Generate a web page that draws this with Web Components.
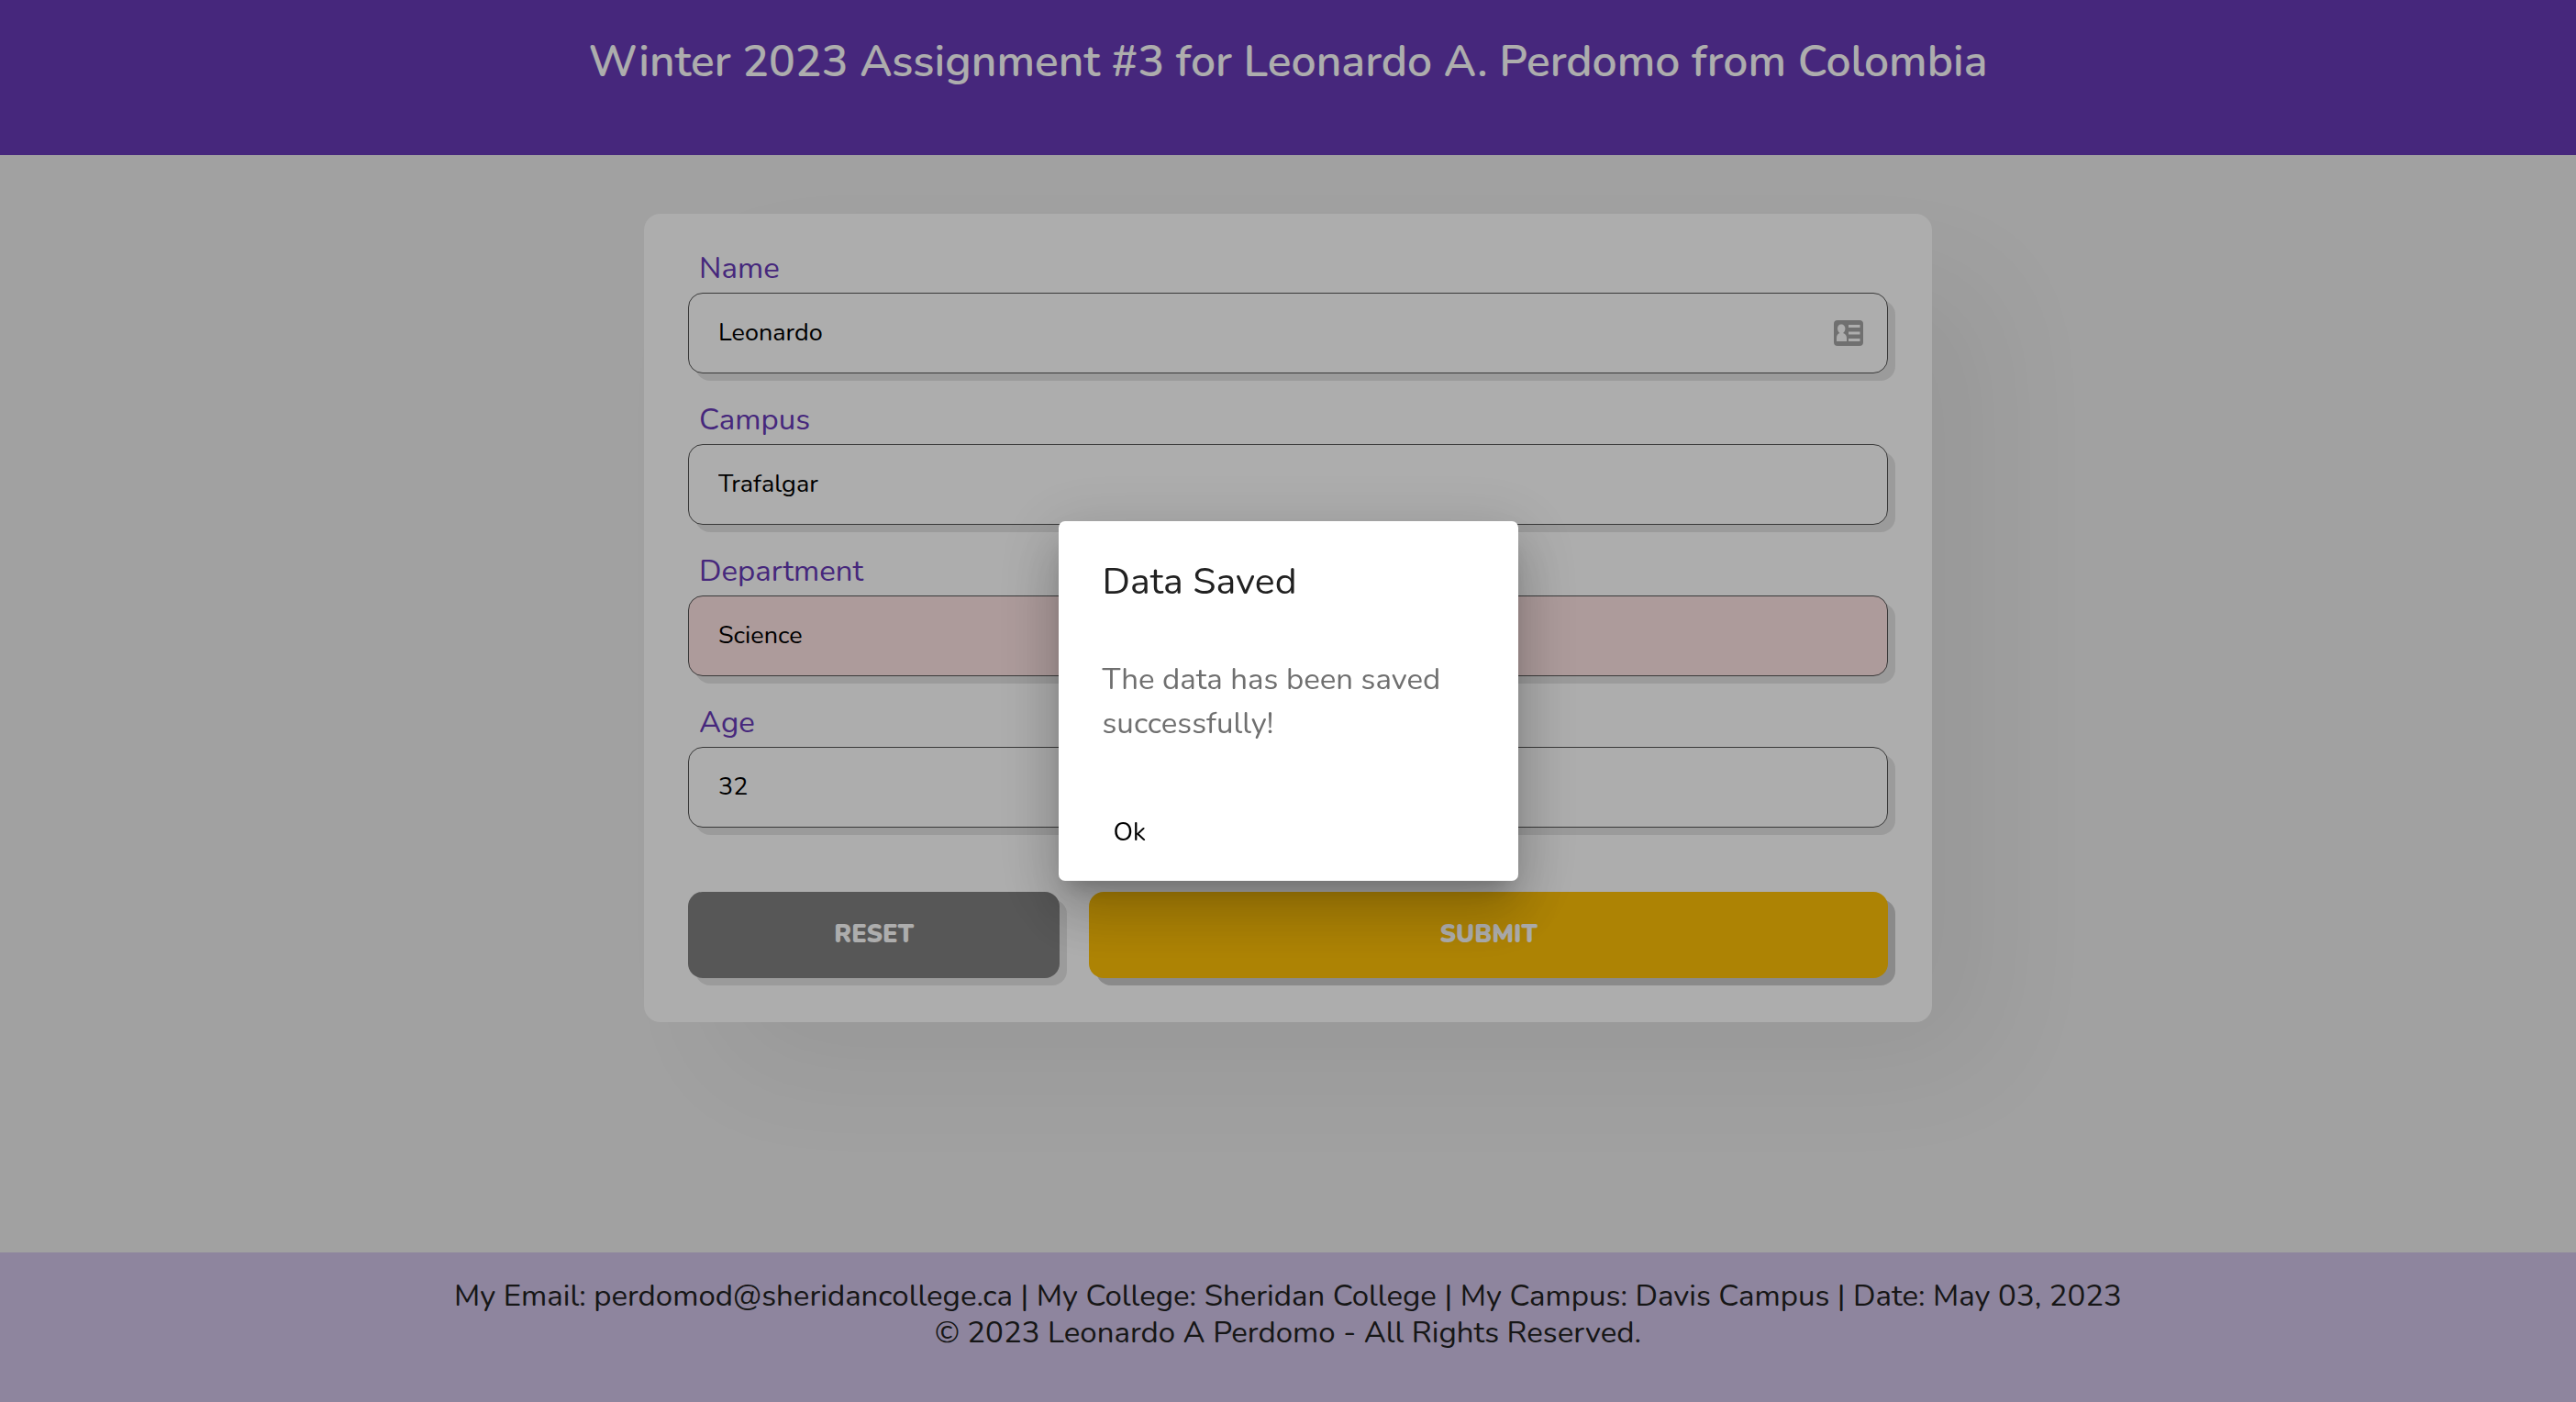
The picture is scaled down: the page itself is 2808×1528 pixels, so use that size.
<!DOCTYPE html>
<html lang="en">
<head>
<meta charset="utf-8">
<title>Assignment 3</title>
<style>
  html, body { margin: 0; }
  body { font-family: Nunito, "Noto Sans", "Open Sans", sans-serif; color: #212121; background: #eee; }
</style>
</head>
<body>
<app-shell>
  <app-header slot="header">Winter 2023 Assignment #3 for Leonardo A. Perdomo from Colombia</app-header>
  <student-form>
    <form-field label="Name" value="Leonardo" icon></form-field>
    <form-field label="Campus" value="Trafalgar"></form-field>
    <form-field label="Department" value="Science" invalid></form-field>
    <form-field label="Age" value="32"></form-field>
    <form-button slot="actions" kind="reset">RESET</form-button>
    <form-button slot="actions" kind="submit">SUBMIT</form-button>
  </student-form>
  <app-footer slot="footer">
    <span>My Email: perdomod@sheridancollege.ca | My College: Sheridan College | My Campus: Davis Campus | Date: May 03, 2023</span>
    <span>© 2023 Leonardo A Perdomo - All Rights Reserved.</span>
  </app-footer>
</app-shell>
<alert-dialog heading="Data Saved">The data has been saved successfully!</alert-dialog>

<script>
const define = (name, render) => customElements.define(name, class extends HTMLElement {
  connectedCallback() {
    if (!this.shadowRoot) this.attachShadow({ mode: 'open' }).innerHTML = render(this);
  }
});

define('app-shell', () => `
  <style>
    :host { display: flex; flex-direction: column; min-height: 100vh; }
    main { flex: 1; display: flex; flex-direction: column; align-items: center; padding: 64px 0; }
  </style>
  <slot name="header"></slot>
  <main><slot></slot></main>
  <slot name="footer"></slot>`);

define('app-header', () => `
  <style>
    :host { display: block; background: #673ab7; color: #fff; }
    h1 { margin: 0; padding: 35px 16px 70px; font-size: 48px; line-height: 64px; font-weight: 600; text-align: center; }
  </style>
  <header><h1><slot></slot></h1></header>`);

define('student-form', () => `
  <style>
    :host { display: block; width: 50%; box-sizing: border-box; }
    form { display: flex; flex-direction: column; gap: 31px; padding: 40px 48px 48px; border-radius: 18px;
      background: #fff; box-shadow: 75px 60px 150px rgba(0,0,0,.06); }
    .actions { display: grid; grid-template-columns: 27fr 58fr; gap: 32px; margin-top: 39px; }
  </style>
  <form onsubmit="return false">
    <slot></slot>
    <div class="actions"><slot name="actions"></slot></div>
  </form>`);

define('form-field', el => `
  <style>
    :host { display: flex; flex-direction: column; gap: 6px; }
    label { padding-left: 12px; font-size: 33px; line-height: 40px; color: #673ab7; }
    .box { display: flex; align-items: center; gap: 16px; height: 88px; box-sizing: border-box; padding: 0 26px 0 32px;
      border: 1px solid #555; border-radius: 16px; background: #fff; box-shadow: 8px 8px 0 rgba(0,0,0,.1); }
    :host([invalid]) .box { background: #ffe5e5; }
    input { flex: 1; min-width: 0; border: 0; padding: 0; outline: 0; background: none; color: #000; font: inherit; font-size: 27px; line-height: 36px; }
    svg { width: 32px; height: 28px; fill: #a6a6a6; }
  </style>
  <label for="field">${el.getAttribute('label')}</label>
  <div class="box">
    <input id="field" type="text" value="${el.getAttribute('value')}">
    ${el.hasAttribute('icon') ? `<svg viewBox="0 0 32 28" aria-hidden="true"><path fill-rule="evenodd" d="M4 0H28Q32 0 32 4V24Q32 28 28 28H4Q0 28 0 24V4Q0 0 4 0ZM8 4.500C5.600 4.500 4 6.600 4 9C4 11.500 5.400 13.300 6.500 14C4 14.800 3 16.800 3 19.500V23H14V19.500C14 16.800 12.500 14.800 10 14C11 13.300 12.400 11.500 12.400 9C12.400 6.600 10.400 4.500 8 4.500ZM16 5V8H28.500V5ZM16 12.600V15.600H28.500V12.600ZM16 20V23H28.500V20Z"/></svg>` : ''}
  </div>`);

define('form-button', el => `
  <style>
    :host { display: block; }
    button { display: block; width: 100%; padding: 29px 16px; border: 0; border-radius: 16px; color: #fff; font: inherit;
      font-size: 27px; line-height: 36px; font-weight: 900; }
    button[type=reset] { background: #808080; box-shadow: 8px 8px 0 rgba(0,0,0,.1); }
    button[type=submit] { background: #ffc107; box-shadow: 8px 8px 0 rgba(0,0,0,.2); }
  </style>
  <button type="${el.getAttribute('kind')}"><slot></slot></button>`);

define('app-footer', () => `
  <style>
    :host { display: block; background: #d1c4e9; }
    footer { display: flex; flex-direction: column; align-items: center; padding: 28px 16px 55px; font-size: 33px; line-height: 40px; text-align: center; }
  </style>
  <footer><slot></slot></footer>`);

define('alert-dialog', el => `
  <style>
    :host { position: fixed; inset: 0; display: grid; place-items: center; background: rgba(0,0,0,.32); }
    section { width: 501px; border-radius: 7px; background: #fff; box-sizing: border-box; padding: 39px 48px 14px;
      box-shadow: 0 16px 22px -10px rgba(0,0,0,.2), 0 36px 57px 4px rgba(0,0,0,.14), 0 14px 69px 12px rgba(0,0,0,.12); }
    h2 { margin: 0; font-size: 41px; line-height: 54px; font-weight: 400; color: #212121; }
    p { margin: 56px 0 0; font-size: 33px; line-height: 48px; color: #6f6f6f; }
    button { display: block; margin-top: 55px; border: 0; padding: 11px 12px; background: none; font: inherit; font-size: 28px; line-height: 56px; color: #000; }
  </style>
  <section role="dialog" aria-labelledby="heading">
    <h2 id="heading">${el.getAttribute('heading')}</h2>
    <p><slot></slot></p>
    <button type="button">Ok</button>
  </section>`);
</script>
</body>
</html>
